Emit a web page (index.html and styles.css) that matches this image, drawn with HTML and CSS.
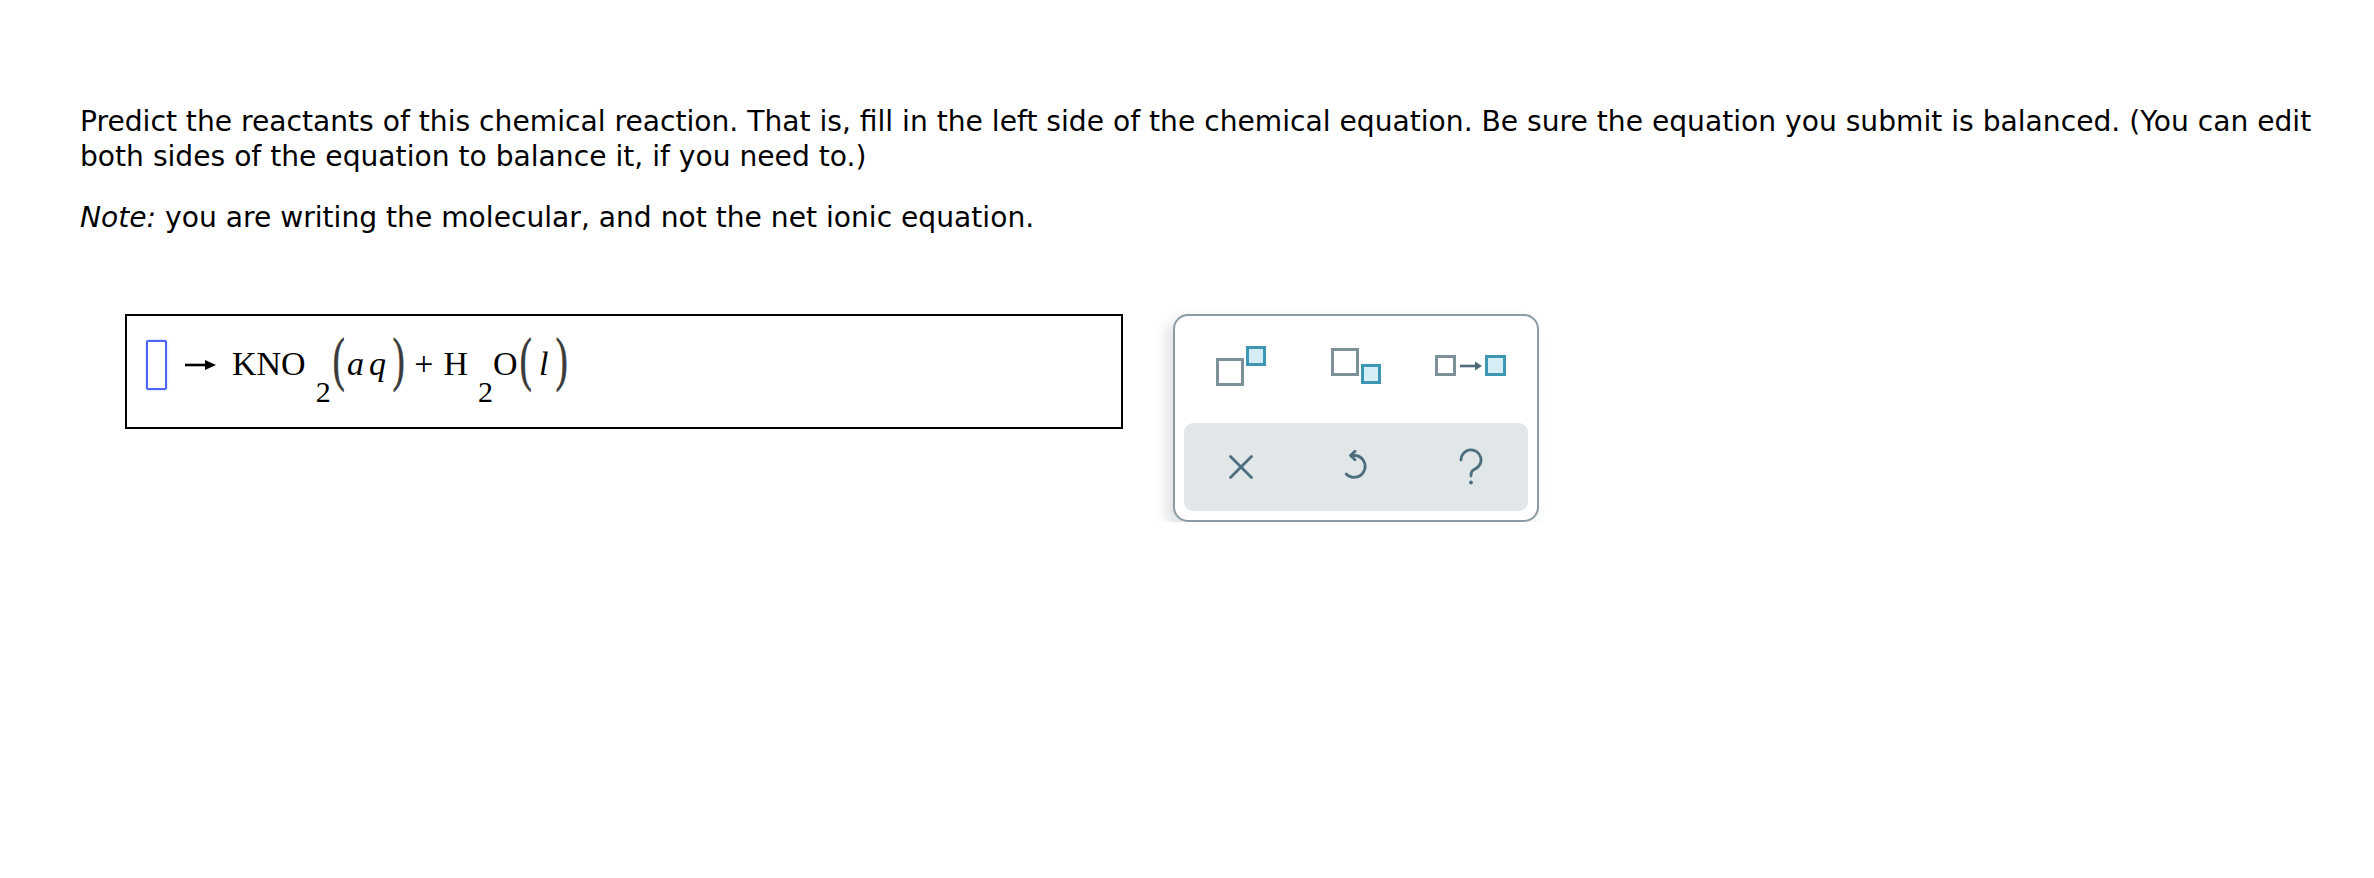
FILE: index.html
```html
<!DOCTYPE html>
<html lang="en">
<head>
<meta charset="utf-8">
<title>Predict the reactants</title>
<link rel="stylesheet" href="styles.css">
</head>
<body>
<div class="page">
  <p class="prompt">Predict the reactants of this chemical reaction. That is, fill in the left side of the chemical equation. Be sure the equation you submit is balanced. (You can edit both sides of the equation to balance it, if you need to.)</p>
  <p class="note"><em>Note:</em> you are writing the molecular, and not the net ionic equation.</p>

  <div class="work">
    <div class="eqbox">
      <div class="eq">
        <span class="slot"></span>
        <svg class="rxn-arrow" width="31" height="12" viewBox="0 0 31 12">
          <line x1="0" y1="6" x2="22" y2="6" stroke="#000" stroke-width="2.6"/>
          <polygon points="20,1 31,6 20,11" fill="#000"/>
        </svg>
        <span class="chem">KNO<span class="sub">2</span><span class="paren">(</span><span class="it">aq</span><span class="paren">)</span><span class="plus">+</span>H<span class="sub">2</span>O<span class="paren">(</span><span class="it it-l">l</span><span class="paren">)</span></span>
      </div>
    </div>

    <div class="palette">
      <div class="tools">
        <button class="tool" type="button" aria-label="superscript">
          <svg width="50" height="40" viewBox="0 0 50 40">
            <rect x="1.5" y="13.5" width="25" height="25" class="sq-gray"/>
            <rect x="31.5" y="1.5" width="17" height="17" class="sq-teal"/>
          </svg>
        </button>
        <button class="tool" type="button" aria-label="subscript">
          <svg width="50" height="36" viewBox="0 0 50 36">
            <rect x="1.5" y="1.5" width="25" height="25" class="sq-gray"/>
            <rect x="31.5" y="17.5" width="17" height="17" class="sq-teal"/>
          </svg>
        </button>
        <button class="tool" type="button" aria-label="reaction arrow">
          <svg width="72" height="22" viewBox="0 0 72 22">
            <rect x="1.5" y="1.5" width="18" height="18" class="sq-gray"/>
            <line x1="25" y1="11" x2="42" y2="11" stroke="#4f6b77" stroke-width="2.6"/>
            <polygon points="40,6.5 47,11 40,15.5" fill="#4f6b77"/>
            <rect x="51.5" y="1.5" width="18" height="18" class="sq-teal"/>
          </svg>
        </button>
      </div>
      <div class="actions">
        <button class="tool" type="button" aria-label="clear">
          <svg width="26" height="26" viewBox="0 0 26 26" class="ico">
            <line x1="2.5" y1="2.5" x2="23.5" y2="23.5"/>
            <line x1="23.5" y1="2.5" x2="2.5" y2="23.5"/>
          </svg>
        </button>
        <button class="tool" type="button" aria-label="undo">
          <svg width="30" height="34" viewBox="0 0 30 34" class="ico">
            <path d="M10 5.5 H15 A11 11 0 1 1 5.2 24"/>
            <path d="M14 1.2 L9.5 5.5 L14 9.8"/>
          </svg>
        </button>
        <button class="tool" type="button" aria-label="help">
          <svg width="26" height="38" viewBox="0 0 26 38" class="ico">
            <path d="M3 12 A10 10 0 1 1 16.5 21.2 Q13 22.8 13 26.5 V28"/>
            <circle cx="13" cy="34.5" r="1.9" class="dot"/>
          </svg>
        </button>
      </div>
    </div>
  </div>
</div>
</body>
</html>
```

FILE: styles.css
```css
html, body {
  margin: 0;
  padding: 0;
  background: #fff;
}

body {
  font-family: "DejaVu Sans", Verdana, sans-serif;
  color: #000;
}

.page {
  padding: 104px 0 0 80px;
}

.prompt,
.note {
  margin: 0;
  font-size: 28.15px;
  line-height: 35px;
  max-width: 2270px;
}

.note {
  margin-top: 26px;
}

.work {
  display: flex;
  align-items: flex-start;
  gap: 50px;
  margin-top: 79px;
  margin-left: 45px;
}

/* equation answer box */
.eqbox {
  box-sizing: border-box;
  width: 998px;
  height: 115px;
  border: 2px solid #000;
  padding: 24px 0 0 19px;
}

.eq {
  display: flex;
  align-items: center;
  height: 50px;
}

.slot {
  box-sizing: border-box;
  width: 21px;
  height: 50px;
  border: 2px solid #4d63f3;
  border-radius: 2px;
  box-shadow: 0 0 2px rgba(77, 99, 243, 0.5);
}

.rxn-arrow {
  margin-left: 18px;
  display: block;
}

.chem {
  margin-left: 16px;
  font-family: "Liberation Serif", "Times New Roman", serif;
  font-size: 34px;
  line-height: 50px;
  white-space: nowrap;
}

.sub {
  font-size: 30px;
  vertical-align: -27px;
  line-height: 0;
  margin: 0 0 0 10px;
}

.paren {
  display: inline-block;
  color: #3a3a3a;
  transform: scale(1.05, 1.72);
  transform-origin: 50% 60%;
  margin: 0 2px;
  -webkit-text-stroke: 0.5px #3a3a3a;
}

.it {
  font-style: italic;
  letter-spacing: 5px;
  margin-left: 1px;
}

.it-l {
  margin: 0 1px 0 6px;
}

.plus {
  margin: 0 10px 0 8px;
}

/* palette */
.palette {
  box-sizing: border-box;
  width: 366px;
  height: 208px;
  border: 2px solid #8a9ca4;
  border-radius: 15px;
  background: #fff;
  padding: 0 9px 9px;
  box-shadow: -6px 6px 14px rgba(60, 80, 90, 0.18);
}

.tools,
.actions {
  display: grid;
  grid-template-columns: repeat(3, 1fr);
  align-items: center;
  justify-items: center;
}

.tools {
  height: 100px;
  margin-bottom: 7px;
}

.actions {
  height: 88px;
  background: #e1e6e9;
  border-radius: 9px;
}

.tool {
  border: 0;
  background: none;
  padding: 0;
  margin: 0;
  display: flex;
  align-items: center;
  justify-content: center;
}

.tool svg {
  display: block;
}

.sq-gray {
  fill: #fff;
  stroke: #7b9099;
  stroke-width: 3;
}

.sq-teal {
  fill: #d5edf4;
  stroke: #3e97b2;
  stroke-width: 3;
}

.ico {
  fill: none;
  stroke: #4c6f7d;
  stroke-width: 2.8;
  stroke-linecap: round;
  stroke-linejoin: round;
}

.ico .dot {
  fill: #4c6f7d;
  stroke: none;
}
```
